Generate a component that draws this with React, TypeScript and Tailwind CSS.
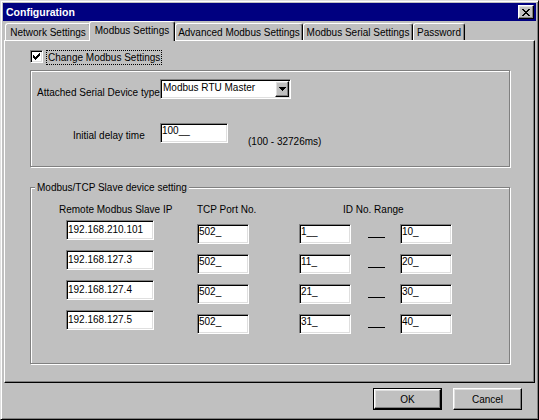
import React from 'react';

interface SlaveRow {
  ip: string;
  port: string;
  idFrom: string;
  idTo: string;
}

const slaves: SlaveRow[] = [
  { ip: '192.168.210.101', port: '502_', idFrom: '1__', idTo: '10_' },
  { ip: '192.168.127.3', port: '502_', idFrom: '11_', idTo: '20_' },
  { ip: '192.168.127.4', port: '502_', idFrom: '21_', idTo: '30_' },
  { ip: '192.168.127.5', port: '502_', idFrom: '31_', idTo: '40_' },
];

const sunken =
  'bg-white border border-t-[#808080] border-l-[#808080] border-b-white border-r-white shadow-[inset_1px_1px_0_#000,inset_-1px_-1px_0_#dfdfdf]';
const raised =
  'bg-[#c0c0c0] border border-t-white border-l-white border-b-black border-r-black shadow-[inset_-1px_-1px_0_#808080,inset_1px_1px_0_#dfdfdf]';
const etched = 'border border-[#808080] shadow-[1px_1px_0_#fff,inset_1px_1px_0_#fff]';

// pixel glyphs, drawn as rects so they stay crisp
const checkRows: [number, number][][] = [
  [[6, 1]],
  [[5, 2]],
  [[0, 1], [4, 3]],
  [[0, 2], [3, 3]],
  [[0, 5]],
  [[1, 3]],
  [[2, 1]],
];

const closeRows: [number, number][][] = [
  [[0, 2], [6, 2]],
  [[1, 2], [5, 2]],
  [[2, 4]],
  [[3, 2]],
  [[2, 4]],
  [[1, 2], [5, 2]],
  [[0, 2], [6, 2]],
];

const PixelGlyph: React.FC<{ rows: [number, number][][]; w: number }> = ({ rows, w }) => (
  <svg width={w} height={rows.length} viewBox={`0 0 ${w} ${rows.length}`} shapeRendering="crispEdges">
    {rows.map((row, y) =>
      row.map(([x, len], i) => <rect key={`${y}-${i}`} x={x} y={y} width={len} height={1} fill="#000" />)
    )}
  </svg>
);

const Tab: React.FC<{ label: string; width: string; selected?: boolean }> = ({ label, width, selected }) => {
  if (selected) {
    return (
      <div
        className={`${width} h-[20px] -mb-px -ml-[2px] relative z-10 bg-[#c0c0c0] border-t border-l border-r border-t-white border-l-white border-r-black shadow-[inset_-1px_0_0_#808080] rounded-t-[3px] flex items-start justify-center pt-[2px] whitespace-nowrap`}
      >
        {label}
      </div>
    );
  }
  return (
    <div
      className={`${width} h-[17px] bg-[#c0c0c0] border-t border-l border-r border-t-white border-l-white border-r-black shadow-[inset_-1px_0_0_#808080] rounded-t-[3px] flex items-start justify-center pt-[2px] whitespace-nowrap`}
    >
      {label}
    </div>
  );
};

const App: React.FC = () => {
  return (
    <div className="w-[539px] h-[420px] bg-[#c0c0c0] border border-t-[#dfdfdf] border-l-[#dfdfdf] border-b-black border-r-black shadow-[inset_1px_1px_0_#fff,inset_-1px_-1px_0_#808080] p-[2px] font-['Liberation_Sans',Arial,sans-serif] text-[10px] leading-[13px] text-black select-none">
      {/* Title bar */}
      <div className="h-[18px] bg-[#000080] flex items-center justify-between pl-[3px] pr-[2px]">
        <span className="text-white font-bold text-[10.5px]">Configuration</span>
        <div className={`${raised} w-[16px] h-[14px] flex items-center justify-center`}>
          <PixelGlyph rows={closeRows} w={8} />
        </div>
      </div>

      {/* Tabs */}
      <div className="h-[19px] flex items-end pl-[2px]">
        <Tab label="Network Settings" width="w-[86px]" />
        <Tab label="Modbus Settings" width="w-[86px]" selected />
        <Tab label="Advanced Modbus Settings" width="w-[128px]" />
        <Tab label="Modbus Serial Settings" width="w-[110px]" />
        <Tab label="Password" width="w-[52px]" />
      </div>

      {/* Tab panel */}
      <div className="ml-[1px] w-[531px] h-[343px] border border-t-white border-l-white border-b-black border-r-black shadow-[inset_-1px_-1px_0_#808080] pt-[9px] pl-[25px]">
        <div className="flex items-start h-[15px]">
          <div className={`${sunken} w-[13px] h-[13px] flex items-center justify-center`}>
            <PixelGlyph rows={checkRows} w={7} />
          </div>
          <span className="ml-[3px] h-[15px] border border-dotted border-black px-[1px] leading-[13px] whitespace-nowrap">
            Change Modbus Settings
          </span>
        </div>

        {/* Serial device group */}
        <div className={`${etched} mt-[5px] w-[480px] h-[97px] pt-[8px]`}>
          <div className="flex items-start">
            <span className="ml-[6px] w-[123px] mt-[7px] whitespace-nowrap">Attached Serial Device type</span>
            <div className={`${sunken} w-[131px] h-[20px] flex items-start`}>
              <span className="pl-[2px] pt-[1px] whitespace-nowrap">Modbus RTU Master</span>
              <div className={`${raised} ml-auto mt-px mr-px w-[14px] h-[16px] flex items-center justify-center`}>
                <svg width="7" height="4" viewBox="0 0 7 4" shapeRendering="crispEdges">
                  <rect x="0" y="0" width="7" height="1" fill="#000" />
                  <rect x="1" y="1" width="5" height="1" fill="#000" />
                  <rect x="2" y="2" width="3" height="1" fill="#000" />
                  <rect x="3" y="3" width="1" height="1" fill="#000" />
                </svg>
              </div>
            </div>
          </div>
          <div className="flex items-start mt-[24px]">
            <span className="ml-[42px] w-[87px] mt-[6px] whitespace-nowrap">Initial delay time</span>
            <div className={`${sunken} w-[68px] h-[20px] pl-[1px]`}>100__</div>
            <span className="ml-[20px] mt-[12px] whitespace-nowrap">(100 - 32726ms)</span>
          </div>
        </div>

        {/* Modbus/TCP slave group */}
        <div className={`${etched} relative mt-[20px] w-[480px] h-[177px]`}>
          <span className="absolute -top-[7px] left-[4px] px-[2px] bg-[#c0c0c0] whitespace-nowrap">
            Modbus/TCP Slave device setting
          </span>
          <div className="flex mt-[15px]">
            <span className="ml-[28px] w-[138px] whitespace-nowrap">Remote Modbus Slave IP</span>
            <span className="w-[146px] whitespace-nowrap">TCP Port No.</span>
            <span className="whitespace-nowrap">ID No. Range</span>
          </div>
          <div className="mt-[4px]">
            {slaves.map((s) => (
              <div key={s.ip} className="flex items-start h-[30px]">
                <div className={`${sunken} ml-[35px] w-[88px] h-[20px] pl-[1px] pt-[2px] whitespace-nowrap`}>{s.ip}</div>
                <div className={`${sunken} ml-[43px] mt-[4px] w-[52px] h-[20px] pl-[1px]`}>{s.port}</div>
                <div className={`${sunken} ml-[50px] mt-[4px] w-[52px] h-[20px] pl-[1px]`}>{s.idFrom}</div>
                <div className="ml-[17px] mt-[17px] w-[17px] h-px bg-black" />
                <div className={`${sunken} ml-[15px] mt-[4px] w-[52px] h-[20px] pl-[1px]`}>{s.idTo}</div>
              </div>
            ))}
          </div>
        </div>
      </div>

      {/* Dialog buttons */}
      <div className="flex justify-end gap-[11px] mt-[5px] pr-[14px]">
        <div className="w-[69px] h-[22px] border border-black">
          <div className={`${raised} w-full h-full flex items-center justify-center`}>OK</div>
        </div>
        <div className={`${raised} w-[69px] h-[22px] flex items-center justify-center`}>Cancel</div>
      </div>
    </div>
  );
};

export default App;
